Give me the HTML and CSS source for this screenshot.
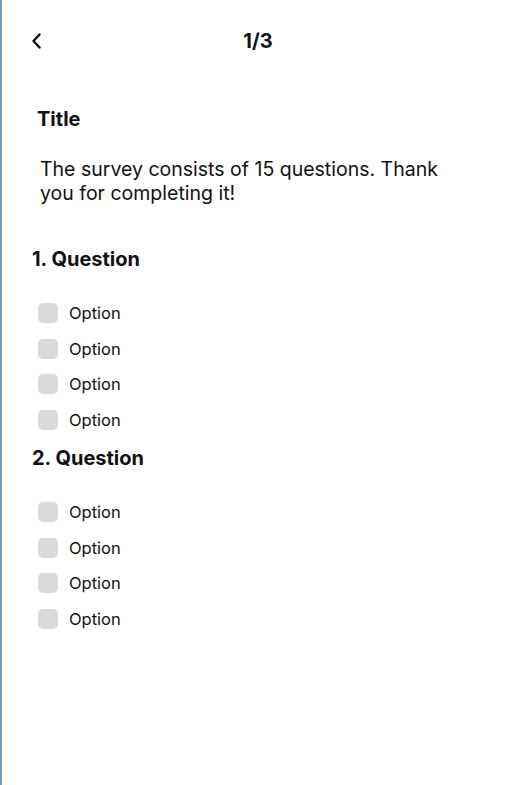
FILE: index.html
```html
<!DOCTYPE html>
<html>
<head>
<meta charset="utf-8">
<link rel="stylesheet" href="styles.css">
</head>
<body>
<div class="screen">
  <header class="topbar">
    <button class="back" aria-label="Back">
      <svg width="14" height="18" viewBox="0 0 14 18"><path d="M9.5 2.5 L3.5 9 L9.5 15.5" fill="none" stroke="#111" stroke-width="2.5" stroke-linecap="round" stroke-linejoin="round"/></svg>
    </button>
    <div class="progress">1/3</div>
  </header>
  <h1 class="title">Title</h1>
  <p class="intro">The survey consists of 15 questions. Thank you for completing it!</p>
  <section class="question">
    <h2 class="qtitle">1. Question</h2>
    <ul class="options">
      <li class="option"><span class="box"></span><span class="label">Option</span></li>
      <li class="option"><span class="box"></span><span class="label">Option</span></li>
      <li class="option"><span class="box"></span><span class="label">Option</span></li>
      <li class="option"><span class="box"></span><span class="label">Option</span></li>
    </ul>
  </section>
  <section class="question q2">
    <h2 class="qtitle">2. Question</h2>
    <ul class="options">
      <li class="option"><span class="box"></span><span class="label">Option</span></li>
      <li class="option"><span class="box"></span><span class="label">Option</span></li>
      <li class="option"><span class="box"></span><span class="label">Option</span></li>
      <li class="option"><span class="box"></span><span class="label">Option</span></li>
    </ul>
  </section>
</div>
</body>
</html>
```
FILE: styles.css
```css
* { box-sizing: border-box; }
html, body { margin: 0; padding: 0; background: #fff; }
body { font-family: Inter, "Noto Sans", sans-serif; color: #111; }
.screen {
  width: 510px;
  min-height: 785px;
  border-left: 2px solid #6e9cbf;
  display: flex;
  flex-direction: column;
}
.topbar {
  display: flex;
  align-items: center;
  justify-content: center;
  padding-top: 29px;
  height: 53px;
  position: relative;
}
.back {
  position: absolute;
  left: 28px;
  top: 32px;
  width: 14px;
  height: 18px;
  padding: 0;
  border: 0;
  background: none;
  display: flex;
}
.progress {
  font-size: 20px;
  font-weight: 700;
  line-height: 24px;
  margin-left: 4px;
}
.title {
  margin: 54px 0 0 35px;
  font-size: 20px;
  font-weight: 700;
  line-height: 24px;
}
.intro {
  margin: 26px 0 0 38px;
  width: 420px;
  font-size: 19.5px;
  font-weight: 400;
  line-height: 24px;
}
.question { margin-top: 42px; padding-left: 30px; }
.question.q2 { margin-top: 16px; }
.qtitle {
  margin: 0;
  font-size: 20px;
  font-weight: 700;
  line-height: 24px;
}
.options {
  list-style: none;
  margin: 32px 0 0 6px;
  padding: 0;
  display: flex;
  flex-direction: column;
  gap: 15.67px;
}
.option {
  display: flex;
  align-items: center;
  gap: 11px;
  height: 20px;
}
.box {
  width: 20px;
  height: 20px;
  border-radius: 5px;
  background: #d9d9d9;
  flex: none;
}
.label {
  font-size: 16.5px;
  line-height: 20px;
  color: #111;
}
```
